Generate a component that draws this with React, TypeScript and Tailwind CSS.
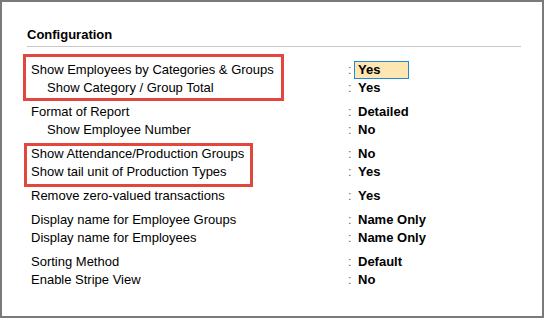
type Row = { label: string; value: string; indent?: boolean; active?: boolean };
type Group = { rows: Row[]; box?: string };

const groups: Group[] = [
  {
    rows: [
      { label: "Show Employees by Categories & Groups", value: "Yes", active: true },
      { label: "Show Category / Group Total", value: "Yes", indent: true },
    ],
    box: "left-[-8px] top-[-7px] w-[261px] h-[47px]",
  },
  {
    rows: [
      { label: "Format of Report", value: "Detailed" },
      { label: "Show Employee Number", value: "No", indent: true },
    ],
  },
  {
    rows: [
      { label: "Show Attendance/Production Groups", value: "No" },
      { label: "Show tail unit of Production Types", value: "Yes" },
    ],
    box: "left-[-7px] top-[-2px] w-[229px] h-[44px]",
  },
  { rows: [{ label: "Remove zero-valued transactions", value: "Yes" }] },
  {
    rows: [
      { label: "Display name for Employee Groups", value: "Name Only" },
      { label: "Display name for Employees", value: "Name Only" },
    ],
  },
  {
    rows: [
      { label: "Sorting Method", value: "Default" },
      { label: "Enable Stripe View", value: "No" },
    ],
  },
];

function ConfigRow({ row }: { row: Row }) {
  return (
    <div className="flex h-[18px] leading-[18px]">
      <div className={`w-[317px] shrink-0 ${row.indent ? "pl-[16px]" : ""}`}>{row.label}</div>
      <div className="w-[6px] shrink-0 text-[#8c6a2e]">:</div>
      {row.active ? (
        <div className="h-[18px] w-[55px] border border-[#1f8ad6] bg-[#fde6b1] pl-[3px] font-bold leading-[16px]">
          {row.value}
        </div>
      ) : (
        <div className="pl-[4px] font-bold">{row.value}</div>
      )}
    </div>
  );
}

export default function App() {
  return (
    <div className="h-[318px] w-[544px] overflow-hidden border-2 border-[#7a7a7a] bg-white font-['Liberation_Sans',Arial,sans-serif] text-[13px] text-black">
      <div className="ml-[25px] w-[494px] pt-[25px]">
        <div className="border-b border-[#c8c8c8] pb-[3px] text-[13px] font-bold leading-[16px]">
          Configuration
        </div>

        <div className="flex flex-col gap-[6px] pl-[4px] pt-[14px]">
          {groups.map((g, i) => (
            <div key={i} className="relative">
              {g.rows.map((r) => (
                <ConfigRow key={r.label} row={r} />
              ))}
              {g.box && (
                <div className={`pointer-events-none absolute border-[3px] border-[#e2463d] ${g.box}`} />
              )}
            </div>
          ))}
        </div>
      </div>
    </div>
  );
}
